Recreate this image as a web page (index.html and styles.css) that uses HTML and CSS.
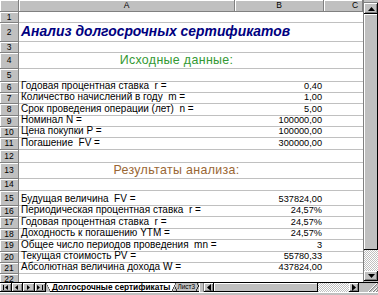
FILE: index.html
```html
<!DOCTYPE html>
<html>
<head>
  <meta charset="utf-8">
  <link rel="stylesheet" href="styles.css">
</head>
<body>
  <div class="excel">
    <div class="main">
      <div class="sheet">
        <div class="row head">
          <div class="rh corner"></div>
          <div class="ca ch">A</div>
          <div class="cb ch">B</div>
          <div class="cc ch ch-c">C</div>
        </div>
        <div class="row h11"><div class="rh">1</div><div class="ca"></div><div class="cb"></div><div class="cc"></div></div>
        <div class="row h19"><div class="rh">2</div><div class="ca title">Анализ долгосрочных сертификатов</div><div class="cb"></div><div class="cc"></div></div>
        <div class="row h11"><div class="rh">3</div><div class="ca"></div><div class="cb"></div><div class="cc"></div></div>
        <div class="row h16"><div class="rh">4</div><div class="cab subhead green">Исходные данные:</div><div class="cc"></div></div>
        <div class="row h13"><div class="rh">5</div><div class="ca"></div><div class="cb"></div><div class="cc"></div></div>
        <div class="row h11"><div class="rh">6</div><div class="ca">Годовая процентная ставка&nbsp; r =</div><div class="cb">0,40</div><div class="cc"></div></div>
        <div class="row h11"><div class="rh">7</div><div class="ca">Количество начислений в году&nbsp; m =</div><div class="cb">1,00</div><div class="cc"></div></div>
        <div class="row h12"><div class="rh">8</div><div class="ca">Срок проведения операции (лет)&nbsp; n =</div><div class="cb">5,00</div><div class="cc"></div></div>
        <div class="row h11"><div class="rh">9</div><div class="ca">Номинал N =</div><div class="cb">100000,00</div><div class="cc"></div></div>
        <div class="row h11"><div class="rh">10</div><div class="ca">Цена покупки P =</div><div class="cb">100000,00</div><div class="cc"></div></div>
        <div class="row h12"><div class="rh">11</div><div class="ca">Погашение&nbsp; FV =</div><div class="cb">300000,00</div><div class="cc"></div></div>
        <div class="row h13"><div class="rh">12</div><div class="ca"></div><div class="cb"></div><div class="cc"></div></div>
        <div class="row h16"><div class="rh">13</div><div class="cab subhead brown">Результаты анализа:</div><div class="cc"></div></div>
        <div class="row h12"><div class="rh">14</div><div class="ca"></div><div class="cb"></div><div class="cc"></div></div>
        <div class="row h15"><div class="rh">15</div><div class="ca">Будущая величина&nbsp; FV =</div><div class="cb">537824,00</div><div class="cc"></div></div>
        <div class="row h11"><div class="rh">16</div><div class="ca">Периодическая процентная ставка&nbsp; r =</div><div class="cb">24,57%</div><div class="cc"></div></div>
        <div class="row h12"><div class="rh">17</div><div class="ca">Годовая процентная ставка&nbsp; r =</div><div class="cb">24,57%</div><div class="cc"></div></div>
        <div class="row h11"><div class="rh">18</div><div class="ca">Доходность к погашению YTM =</div><div class="cb">24,57%</div><div class="cc"></div></div>
        <div class="row h12"><div class="rh">19</div><div class="ca">Общее число периодов проведения&nbsp; mn =</div><div class="cb">3</div><div class="cc"></div></div>
        <div class="row h11"><div class="rh">20</div><div class="ca">Текущая стоимость PV =</div><div class="cb">55780,33</div><div class="cc"></div></div>
        <div class="row h11"><div class="rh">21</div><div class="ca">Абсолютная величина дохода W =</div><div class="cb">437824,00</div><div class="cc"></div></div>
        <div class="row h11"><div class="rh">22</div><div class="ca"></div><div class="cb"></div><div class="cc"></div></div>
      </div>

      <div class="vscroll">
        <div class="split"></div>
        <div class="sbtn up">
          <svg width="7" height="4" viewBox="0 0 7 4"><path d="M3.5 0L7 4H0z"/></svg>
        </div>
        <div class="vthumb"></div>
        <div class="vtrack checker"></div>
        <div class="sbtn down">
          <svg width="7" height="4" viewBox="0 0 7 4"><path d="M0 0h7L3.5 4z"/></svg>
        </div>
      </div>
    </div>

    <div class="tabbar">
      <div class="nav">
        <div class="sbtn nbtn">
          <svg width="6" height="5" viewBox="0 0 6 5"><path d="M0 0h1v5H0zM5 0v5L2 2.5z"/></svg>
        </div>
        <div class="sbtn nbtn">
          <svg width="4" height="5" viewBox="0 0 4 5"><path d="M3 0v5L0 2.5z"/></svg>
        </div>
        <div class="sbtn nbtn">
          <svg width="4" height="5" viewBox="0 0 4 5"><path d="M0 0v5L3 2.5z"/></svg>
        </div>
        <div class="sbtn nbtn">
          <svg width="6" height="5" viewBox="0 0 6 5"><path d="M0 0v5L3 2.5zM5 0h1v5H5z"/></svg>
        </div>
      </div>
      <div class="tabs">
        <div class="tab active">Долгосрочные сертификаты</div>
        <div class="tab">Лист3</div>
        <div class="tab">Лист4</div>
      </div>
      <div class="splitter"></div>
      <div class="sbtn hbtn">
        <svg width="4" height="7" viewBox="0 0 4 7"><path d="M4 0v7L0 3.5z"/></svg>
      </div>
      <div class="hthumb"></div>
      <div class="htrack checker"></div>
      <div class="sbtn hbtn">
        <svg width="4" height="7" viewBox="0 0 4 7"><path d="M0 0v7L4 3.5z"/></svg>
      </div>
      <div class="gap"></div>
      <div class="grip">
        <svg width="13" height="10" viewBox="0 0 13 10">
          <path d="M12 1L3 10M12 5L7 10M12 8L10 10" stroke="#fff" stroke-width="1"/>
          <path d="M13 1L4 10M13 5L8 10M13 8L11 10" stroke="#808080" stroke-width="1"/>
        </svg>
      </div>
    </div>
    <div class="status"></div>
  </div>
</body>
</html>
```

FILE: styles.css
```css
* {
  margin: 0;
  padding: 0;
  box-sizing: border-box;
}

body {
  width: 378px;
  height: 295px;
  overflow: hidden;
  background: #c0c0c0;
  font-family: 'Liberation Sans', Arial, sans-serif;
  font-size: 10px;
  color: #000;
}

.excel {
  display: flex;
  flex-direction: column;
  height: 295px;
}

.main {
  display: flex;
  height: 282px;
}

/* sheet grid */
.sheet {
  width: 363px;
  display: flex;
  flex-direction: column;
  overflow: hidden;
  background: #fff;
}

.row {
  display: flex;
  flex: none;
  height: 11px;
}

.row > div {
  display: flex;
  align-items: flex-end;
  padding: 0 2px 1px;
  border-bottom: 1px solid #c0c0c0;
  white-space: nowrap;
  line-height: 1;
}

.h11 { height: 11px; }
.h12 { height: 12px; }
.h13 { height: 13px; }
.h15 { height: 15px; }
.h16 { height: 16px; }
.h19 { height: 19px; }

.rh {
  width: 19px;
  flex: none;
  justify-content: center;
  align-items: center !important;
  padding: 0 !important;
  background: #c0c0c0;
  border-bottom: 1px solid #808080 !important;
  border-right: 1px solid #808080;
  box-shadow: inset 1px 1px #fff;
  font-size: 8.5px;
}

.ca { width: 216px; flex: none; }
.cb { width: 89px; flex: none; justify-content: flex-end; font-size: 9.2px; }
.cc { flex: 1; }
.cab { width: 305px; flex: none; justify-content: center; padding-left: 12px !important; }

/* column headers */
.head {
  height: 12px;
  background: #c0c0c0;
}

.head > div {
  align-items: center;
  justify-content: center;
  padding: 0;
  border-bottom: 1px solid #808080;
  border-right: 1px solid #808080;
  box-shadow: inset 1px 1px #fff;
  font-size: 8.5px;
}

.head .ch-c {
  justify-content: flex-start;
  padding-left: 28px;
}

.title {
  font-size: 13.9px;
  font-weight: bold;
  font-style: italic;
  color: #000080;
  padding-bottom: 2px !important;
}

.subhead {
  font-size: 12.4px;
  letter-spacing: 0.35px;
  padding-bottom: 2px !important;
}

.green { color: #339933; }
.brown { color: #996633; }

/* scrollbars */
.sbtn {
  display: flex;
  align-items: center;
  justify-content: center;
  flex: none;
  background: #c0c0c0;
  box-shadow: inset -1px -1px #000, inset 1px 1px #fff, inset -2px -2px #808080;
}

.checker {
  background: repeating-conic-gradient(#fff 0 25%, #c0c0c0 0 50%);
  background-size: 2px 2px;
}

.vscroll {
  width: 15px;
  display: flex;
  flex-direction: column;
  border-left: 1px solid #808080;
  background: #c0c0c0;
}

.split { height: 3px; border-bottom: 1px solid #808080; }
.up { height: 11px; }
.down { height: 10px; margin-bottom: 1px; }

.vthumb {
  height: 236px;
  background: #c0c0c0;
  box-shadow: inset -1px -1px #000, inset 1px 1px #fff;
}

.vtrack { flex: 1; }

.tabbar {
  height: 10px;
  display: flex;
  background: #c0c0c0;
  border-top: 1px solid #000;
}

.nav { display: flex; width: 46px; flex: none; }
.nbtn { width: 11.5px; height: 100%; }

.tabs {
  width: 153px;
  display: flex;
  overflow: hidden;
  flex: none;
}

.tab {
  position: relative;
  height: 100%;
  padding: 0 5px 0 4px;
  display: flex;
  align-items: center;
  font-size: 6.5px;
  line-height: 1;
  white-space: nowrap;
  border-bottom: 1px solid #000;
  margin-right: -3px;
}

.tab::before,
.tab::after {
  content: "";
  position: absolute;
  top: 0;
  width: 4px;
  height: 100%;
}

.tab::before {
  left: 0;
  background: linear-gradient(to top right, transparent calc(50% - 0.7px), #000 50%, transparent calc(50% + 0.7px));
}

.tab::after {
  right: 0;
  background: linear-gradient(to top left, transparent calc(50% - 0.7px), #000 50%, transparent calc(50% + 0.7px));
}

.tab.active {
  z-index: 1;
  font-size: 8.3px;
  font-weight: bold;
  background: #fff;
  clip-path: polygon(0 0, 100% 0, calc(100% - 4px) 100%, 4px 100%);
  padding: 0 6px 0 6px;
}

.splitter {
  width: 5px;
  flex: none;
  box-shadow: inset 1px 0 #fff, inset -1px 0 #808080;
}

.hbtn { width: 10px; height: 100%; }

.hthumb {
  width: 104px;
  flex: none;
  box-shadow: inset -1px -1px #000, inset 1px 1px #fff;
}

.htrack { width: 31px; flex: none; }

.gap { width: 2px; flex: none; }

.grip {
  flex: 1;
  display: flex;
  align-items: flex-end;
  justify-content: flex-end;
}

.status {
  flex: 1;
  border-top: 1px solid #fff;
}
```
